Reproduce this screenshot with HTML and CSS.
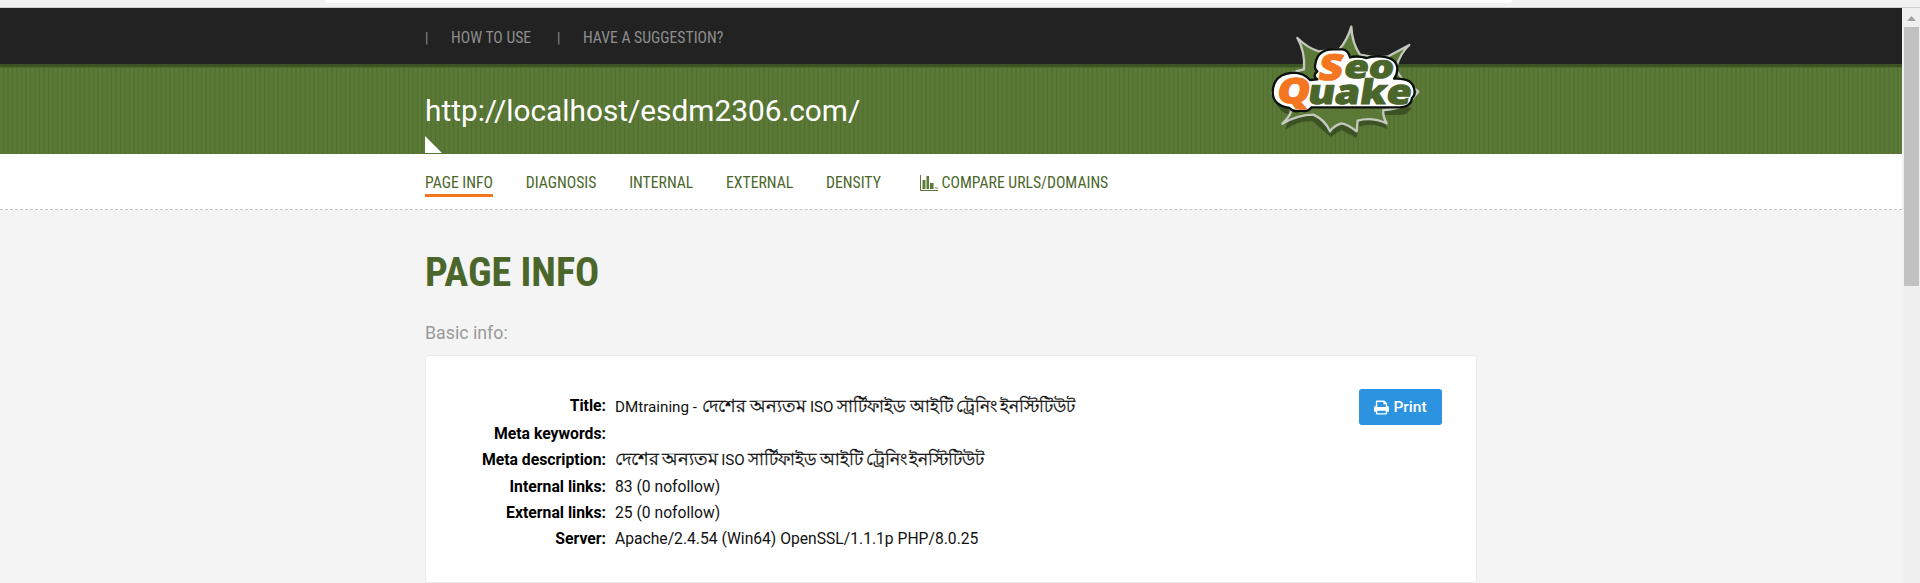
FILE: index.html
```
<!DOCTYPE html>
<html lang="en">
<head>
<meta charset="utf-8">
<title>SEOquake - Page info</title>
<link rel="stylesheet" href="styles.css">
</head>
<body>
<div class="chrome"><div class="omnibox"></div></div>
<div class="viewport">
  <div class="page">
    <header>
      <div class="topbar">
        <div class="wrap toplinks">
          <span class="sep">|</span><a class="cond how">HOW TO USE</a><span class="sep">|</span><a class="cond">HAVE A SUGGESTION?</a>
        </div>
      </div>
      <div class="banner">
        <div class="wrap banner-inner">
          <div class="url">http://localhost/esdm2306.com/</div>
          <div class="notch"></div>
          <svg class="logo" width="190" height="160" viewBox="0 0 570 480">
            <path class="burst-shadow" d="M78 308Q90 338 120 344L105 390Q145 360 188 364L242 411 274 390 320 414 326 380Q370 365 412 388L400 345H455Q478 342 484 322Z"/>
            <path class="burst" d="M142 114Q175 145 206 154L268 148Q292 120 304 80Q306 130 330 164Q370 174 412 170Q450 150 478 135Q450 160 438 204Q450 240 484 258L505 275 488 295Q470 325 400 330Q398 350 410 370Q365 350 323 362L320 394Q292 372 274 370Q250 378 240 394Q225 360 190 344Q145 344 97 371Q120 350 124 330L66 280Q84 224 162 208Q166 155 142 114Z"/>
            <path class="plate" d="M196 192Q202 148 250 148H278Q294 150 300 172Q320 166 350 174Q370 166 396 170Q442 174 442 208Q442 224 432 236Q492 232 494 276Q494 288 486 294Q484 320 450 322H184Q176 336 152 332Q130 338 118 324Q68 316 68 276Q70 220 134 218Q162 220 180 240L202 238Q190 230 196 220L202 214Q192 206 196 192Z"/>
            <g class="word">
              <text class="or" transform="translate(202 239) skewX(-9)" textLength="72" lengthAdjust="spacingAndGlyphs" font-size="108">S</text>
              <text transform="translate(279 233) skewX(-9)" textLength="149" lengthAdjust="spacingAndGlyphs" font-size="94">eo</text>
              <text class="or" transform="translate(77 309) skewX(-9)" textLength="99" lengthAdjust="spacingAndGlyphs" font-size="104">Q</text>
              <text transform="translate(170 312) skewX(-9)" textLength="310" lengthAdjust="spacingAndGlyphs" font-size="102">uake</text>
            </g>
          </svg>
        </div>
      </div>
    </header>
    <nav>
      <div class="wrap navlinks">
        <a class="cond active">PAGE INFO</a><a class="cond">DIAGNOSIS</a><a class="cond">INTERNAL</a><a class="cond">EXTERNAL</a><a class="cond">DENSITY</a><a class="cond compare"><svg width="18" height="16" viewBox="0 0 18 16"><path fill="#5b7936" d="M0 0h1v15h17v1H0zM2.500 5h3v9h-3zM6.500 1h2.500v13H6.500zM10 8h3.500v6H10z"/><path fill="#b8c6a8" d="M14.500 12H18v2h-3.500z"/></svg>COMPARE URLS/DOMAINS</a>
      </div>
    </nav>
    <main class="wrap">
      <h1>PAGE INFO</h1>
      <h2>Basic info:</h2>
      <section class="card">
        <dl>
          <dt>Title:</dt><dd class="title">DMtraining - <span class="bn wide">দেশের অন্যতম</span> ISO <span class="bn">সার্টিফাইড আইটি ট্রেনিং ইনস্টিটিউট</span></dd>
          <dt>Meta keywords:</dt><dd></dd>
          <dt>Meta description:</dt><dd class="title desc"><span class="bn wide">দেশের অন্যতম</span> ISO <span class="bn">সার্টিফাইড আইটি ট্রেনিং ইনস্টিটিউট</span></dd>
          <dt>Internal links:</dt><dd>83 (0 nofollow)</dd>
          <dt>External links:</dt><dd>25 (0 nofollow)</dd>
          <dt>Server:</dt><dd>Apache/2.4.54 (Win64) OpenSSL/1.1.1p PHP/8.0.25</dd>
        </dl>
        <button class="print"><svg width="15" height="15" viewBox="0 0 16 15"><path fill="#fff" fill-rule="evenodd" d="M2 6V1Q2 0 3 0H11L14 3V6Q16 6 16 8V12H14V14Q14 15 13 15H3Q2 15 2 14V12H0V8Q0 6 2 6ZM3.500 7H12.500V4H10V1.500H3.500ZM3.500 11V13.500H12.500V11Z"/></svg>Print</button>
      </section>
    </main>
  </div>
  <div class="scroll"><div class="arrow"></div><div class="thumb"></div></div>
</div>
</body>
</html>
```
FILE: styles.css
```
* { box-sizing: border-box; }
body { margin: 0; height: 583px; overflow: hidden; font-family: Roboto, "Liberation Sans", sans-serif; background: #f4f4f4; }
.chrome { height: 8px; background: #f1f1f1; border-bottom: 1px solid #d0d0d0; }
.omnibox { margin-left: 325px; width: 1187px; height: 3px; background: #fff; border-radius: 0 0 3px 3px; }
.viewport { display: flex; height: 575px; }
.page { width: 1902px; background: #f4f4f4; }
.wrap { width: 1052px; margin-left: 425px; }
.topbar { height: 56px; background: #222; }
.toplinks { display: flex; align-items: center; height: 59px; color: #8e8e8e; font-size: 15.7px; }
.cond, h1 { font-family: "Roboto Condensed", Roboto, sans-serif; font-stretch: 75%; white-space: nowrap; }
.sep { width: 26px; font-size: 14px; }
.how { width: 106px; }
.banner { height: 90px; background: linear-gradient(#3c5424 0 3px, rgba(60,84,36,.35) 3px 4px, transparent 4px), repeating-linear-gradient(90deg, #5b7936 0 3px, #51702e 3px 4px, #5b7936 4px 7px, #567333 7px 9px); }
.banner-inner { position: relative; height: 90px; padding-top: 29px; }
.url { color: #fff; font-size: 29.8px; line-height: 36px; white-space: nowrap; }
.notch { margin-top: 7px; width: 17px; height: 17px; background: #fff; clip-path: polygon(0 0, 100% 100%, 0 100%); }
.logo { position: absolute; left: 825px; top: -64px; }
.burst { fill: #5b7936; stroke: #c4c8bf; stroke-width: 7; stroke-linejoin: round; }
.burst-shadow { fill: #344a20; opacity: .8; }
.plate { fill: #fff; stroke: #0c100c; stroke-width: 7; stroke-linejoin: round; }
.word { font-family: "Open Sans", sans-serif; font-weight: 800; fill: #4b662b; stroke: #4b662b; stroke-width: 3; }
.word .or { fill: #f47621; stroke: #f47621; }
nav { height: 56px; background: #fff; border-bottom: 1px dashed #c4c4c4; }
.navlinks { display: flex; padding-top: 17px; color: #4b662b; font-size: 15.72px; line-height: 24px; }
.navlinks a { height: 26px; margin-right: 32.700px; }
.navlinks .active { border-bottom: 3px solid #f47621; }
.navlinks .compare { margin-left: 6px; display: flex; align-items: flex-start; gap: 4px; }
.compare svg { margin-top: 4px; }
h1 { margin: 0; padding-top: 39px; font-size: 40.2px; line-height: 48px; font-weight: 700; color: #4b662b; }
h2 { margin: 0; padding-top: 24px; font-size: 17.8px; line-height: 24px; font-weight: 400; color: #999; }
.card { margin-top: 10px; height: 228px; background: #fff; border: 1px solid #ebebeb; border-radius: 3px; display: flex; justify-content: space-between; padding: 33px 34px 0 54px; }
dl { display: grid; grid-template-columns: 126px auto; column-gap: 9px; grid-template-rows: 28px 26px 27px 26px 26px 26px; margin: 4px 0 0; font-size: 15.66px; line-height: 26px; white-space: nowrap; color: #111; }
dt { font-weight: 700; color: #000; text-align: right; font-size: 15.75px; }
dd { margin: 0; }
.title { font-size: 15.2px; line-height: 28px; }
.bn { font-size: 17px; line-height: 20px; word-spacing: -.9px; -webkit-text-stroke: .3px #111; }
.wide { font-size: 17.900px; word-spacing: 0; margin-left: 1px; }
.desc { line-height: 26px; word-spacing: -.6px; }
.desc .wide { margin-left: 0; }
.desc .bn { word-spacing: -1.4px; }
.print { width: 83px; height: 36px; padding: 0; border: 0; border-radius: 3px; background: #2c93e1; color: #fff; font: 500 15.5px Roboto, sans-serif; display: flex; align-items: center; justify-content: center; gap: 4px; }
.scroll { width: 18px; background: #f0f0f0; padding: 8px 1px 0 2px; }
.arrow { margin: 0 auto; width: 9px; height: 5px; background: #a0a0a0; clip-path: polygon(50% 0, 100% 100%, 0 100%); }
.thumb { margin-top: 6px; height: 259px; background: #c1c1c1; }
```
